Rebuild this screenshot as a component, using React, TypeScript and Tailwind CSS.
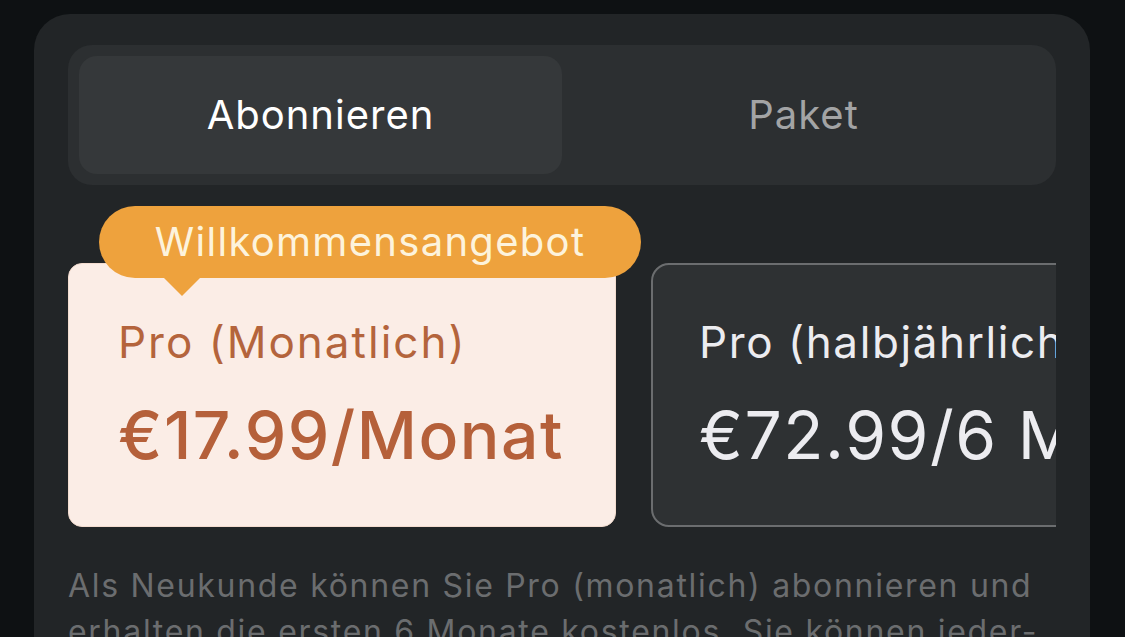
import React from 'react';

const font = { fontFamily: 'Inter, "Noto Sans", sans-serif' };

export default function App() {
    return (
        <div className="h-[637px] w-full overflow-hidden bg-[#0e1113] pl-[34px] pr-[35px] pt-[14px]" style={font}>
            <div className="h-[700px] rounded-t-[36px] bg-[#222527] px-[34px] pt-[31px]">
                {/* tabs */}
                <div className="flex h-[140px] rounded-[24px] bg-[#2c2f31] p-[11px]">
                    <div className="flex w-[483px] items-center justify-center rounded-[18px] bg-[#35383a] text-[40px] tracking-[1px] text-white">
                        Abonnieren
                    </div>
                    <div className="flex flex-1 items-center justify-center text-[40px] tracking-[1px] text-[#a3a4a5]">
                        Paket
                    </div>
                </div>

                {/* plans */}
                <div className="relative mt-[21px] flex gap-[35px] overflow-hidden pt-[57px]">
                    <div className="flex h-[264px] w-[548px] shrink-0 flex-col rounded-[14px] border border-[#f3dccf] bg-[#fbede6] pl-[49px] pt-[53px]">
                        <div className="whitespace-nowrap text-[44px] leading-[50px] tracking-[2px] text-[#b4643c]">Pro (Monatlich)</div>
                        <div className="mt-[32px] whitespace-nowrap text-[66px] font-medium leading-[72px] tracking-[1.5px] text-[#b5603a]">€17.99/Monat</div>
                    </div>
                    <div className="flex h-[264px] w-[548px] shrink-0 flex-col rounded-[18px] border-2 border-[#6b6d6f] bg-[#2e3133] pl-[46px] pt-[52px]">
                        <div className="whitespace-nowrap text-[44px] leading-[50px] tracking-[1.6px] text-[#ececf0]">Pro (halbjährlich)</div>
                        <div className="mt-[32px] whitespace-nowrap text-[66px] leading-[72px] tracking-[1.5px] text-[#ececf0]">€72.99/6 Monate</div>
                    </div>

                    {/* welcome badge */}
                    <div className="absolute left-[31px] top-0 flex h-[72px] w-[542px] items-center justify-center rounded-full bg-[#eea23d] text-[40px] tracking-[1.3px] text-[#fdf3dc]">
                        Willkommensangebot
                        <div className="absolute left-[64px] top-[71px] h-0 w-0 border-x-[19px] border-t-[19px] border-x-transparent border-t-[#eea23d]" />
                    </div>
                </div>

                <p className="mt-[36px] text-[32px] leading-[46px] tracking-[1.7px] text-[#6b6d6f]">
                    Als Neukunde können Sie Pro (monatlich) abonnieren und erhalten die ersten 6 Monate kostenlos. Sie können jeder-
                </p>
            </div>
        </div>
    );
}
